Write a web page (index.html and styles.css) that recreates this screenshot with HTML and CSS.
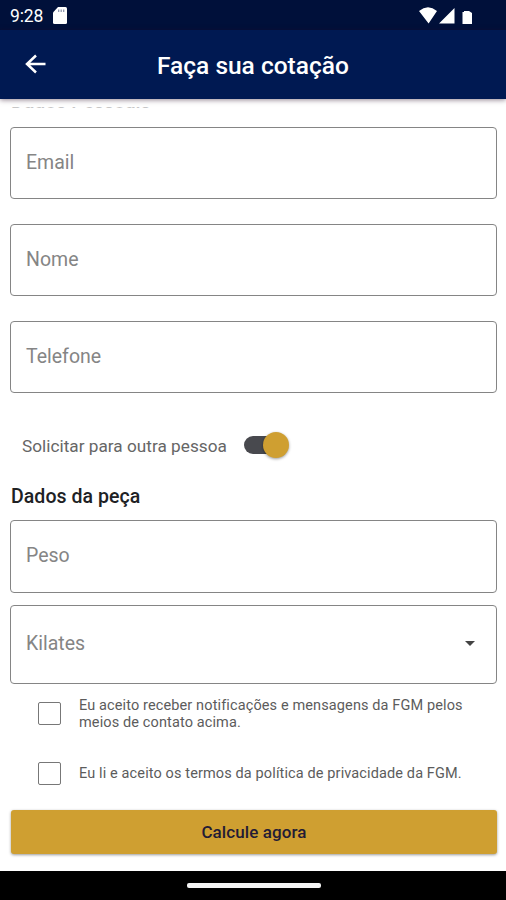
FILE: index.html
```html
<!DOCTYPE html>
<html lang="pt-BR">
<head>
<meta charset="utf-8">
<title>Faça sua cotação</title>
<link rel="stylesheet" href="styles.css">
</head>
<body>
<div class="status">
  <span class="time">9:28</span>
  <svg class="sd" width="14" height="17" viewBox="0 0 14 17"><path fill="#fff" d="M5 0h7.500q1.500 0 1.500 1.500v14q0 1.500-1.500 1.500h-11Q0 17 0 15.500V5.500z"/><path stroke="#8790a8" stroke-width="1.200" d="M5.700 2.500v2.500M8.200 2.500v2.500M10.700 2.500v2.500"/></svg>
  <svg class="signals" width="54" height="18" viewBox="0 0 54 18"><path fill="#fff" d="M0 4Q9-3.400 18 4L9.600 16.500zM20 16.500L35.500 1v15.500z"/><path fill="#fff" d="M43.500 5h1.500V4h5l3 2v11h-9.500z"/></svg>
</div>
<header class="appbar">
  <svg class="back" width="22" height="20" viewBox="0 0 22 20"><path fill="none" stroke="#fff" stroke-width="2.500" d="M20.500 10H2.500M11 1.500L2 10l9 8.500"/></svg>
  <h1>Faça sua cotação</h1>
</header>
<main>
  <div class="clip"><h2>Dados Pessoais</h2></div>
  <div class="field">Email</div>
  <div class="field">Nome</div>
  <div class="field">Telefone</div>
  <div class="switch-row"><span>Solicitar para outra pessoa</span><i class="switch"></i></div>
  <h2 class="section">Dados da peça</h2>
  <div class="field weight">Peso</div>
  <div class="field select"><span>Kilates</span><i class="caret"></i></div>
  <div class="check first"><i class="box"></i><p>Eu aceito receber notificações e mensagens da FGM pelos<br>meios de contato acima.</p></div>
  <div class="check"><i class="box"></i><p>Eu li e aceito os termos da política de privacidade da FGM.</p></div>
  <button>Calcule agora</button>
</main>
<footer><i class="pill"></i></footer>
</body>
</html>
```
FILE: styles.css
```css
* { box-sizing: border-box; }
body { margin: 0; width: 506px; height: 900px; overflow: hidden; display: flex; flex-direction: column; background: #fff; font-family: Roboto, "Liberation Sans", sans-serif; color: #202124; }
h1, h2, p { margin: 0; }
svg, i { display: block; flex: none; }
.status { height: 30px; flex: none; display: flex; align-items: center; padding: 1px 33px 0 10px; background: #00103a; color: #fff; }
.time { width: 43px; font-size: 17.500px; line-height: 20px; letter-spacing: -.1px; }
.signals { margin-left: auto; }
.appbar { height: 69px; flex: none; display: flex; align-items: center; padding-left: 25px; background: #001952; color: #fff; box-shadow: 0 1px 5px rgba(40,10,35,.5); }
.back { position: relative; top: -1px; }
h1 { margin-left: 110px; font-size: 24.500px; line-height: 30px; font-weight: 500; white-space: nowrap; padding-top: 2px; }
main { flex: 1; padding: 8px 9px 0 10px; display: flex; flex-direction: column; }
.clip { height: 2px; margin-bottom: 18px; padding-left: 1px; overflow: hidden; flex: none; opacity: .25; }
.clip h2 { margin-top: -17px; }
h2 { font-size: 19.500px; line-height: 24px; font-weight: 500; letter-spacing: .05px; white-space: nowrap; }
.clip h2 { letter-spacing: 0; }
.field { height: 72px; flex: none; margin-bottom: 25px; padding: 0 15px 2px; display: flex; align-items: center; border: 1px solid #858585; border-radius: 4px; font-size: 19.500px; letter-spacing: 0; color: #858585; }
.switch-row { display: flex; align-items: center; height: 28px; margin-top: 13px; padding-left: 12px; font-size: 17.200px; color: #666; letter-spacing: .02px; }
.switch-row span { width: 222px; padding-top: 1px; white-space: nowrap; }
.switch { position: relative; width: 41px; height: 18px; border-radius: 9px; background: #48494e; }
.switch::after { content: ""; position: absolute; right: -4px; top: -4px; width: 26px; height: 26px; border-radius: 50%; background: #cf9f31; box-shadow: 0 1px 3px rgba(0,0,0,.4); }
.section { margin: 26px 0 11px 1px; }
.weight { height: 73px; margin-bottom: 12px; }
.select { height: 79px; margin-bottom: 0; justify-content: space-between; padding-right: 21px; }
.caret { border: 5px solid transparent; border-top-color: #444; border-bottom: 0; }
.check { display: flex; align-items: center; height: 44px; padding-left: 28px; margin: 8px 0 15px; font-size: 14.500px; line-height: 17px; letter-spacing: .12px; color: #5c5c5c; }
.check.first { margin: 7px 0 8px; }
.check.first p { padding-top: 1px; }
.box { width: 23px; height: 23px; margin-right: 18px; border: 1.500px solid #777; border-radius: 2px; }
.check p { white-space: nowrap; }
button { height: 44px; margin-left: 1px; border: 0; border-radius: 3px; background: #cf9f31; color: #231b35; font: 500 17px/20px Roboto, sans-serif; letter-spacing: .1px; box-shadow: 0 1px 3px rgba(0,0,0,.4); }
footer { height: 29px; flex: none; background: #000; display: flex; padding: 12px 0 0 187px; }
.pill { width: 134px; height: 5px; border-radius: 2px; background: #f4f4f4; }
```
